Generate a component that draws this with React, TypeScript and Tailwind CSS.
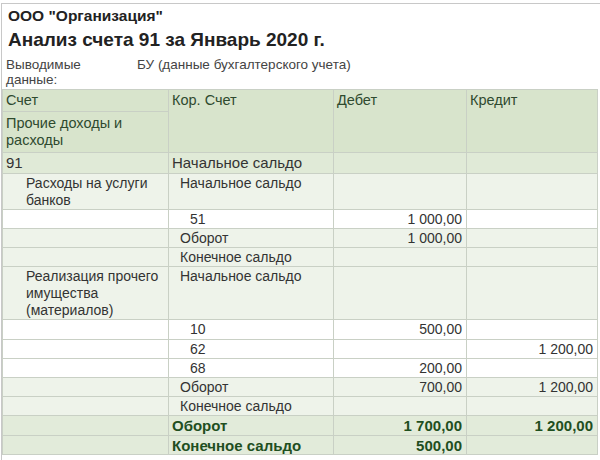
type Row = {
    acc?: string;
    accIndent?: number;
    kor: string;
    korIndent: number;
    debit?: string;
    credit?: string;
    h: number;
    bg: string;
    kind?: "group" | "total";
};

const rows: Row[] = [
    { acc: "91", accIndent: 3, kor: "Начальное сальдо", korIndent: 3, h: 21, bg: "bg-[#e0ead7]", kind: "group" },
    { acc: "Расходы на услуги банков", accIndent: 23, kor: "Начальное сальдо", korIndent: 11, h: 35, bg: "bg-[#eef3ea]" },
    { kor: "51", korIndent: 21, debit: "1 000,00", h: 19, bg: "bg-white" },
    { kor: "Оборот", korIndent: 11, debit: "1 000,00", h: 19, bg: "bg-[#eef3ea]" },
    { kor: "Конечное сальдо", korIndent: 11, h: 19, bg: "bg-[#eef3ea]" },
    { acc: "Реализация прочего имущества (материалов)", accIndent: 23, kor: "Начальное сальдо", korIndent: 11, h: 53, bg: "bg-[#eef3ea]" },
    { kor: "10", korIndent: 21, debit: "500,00", h: 20, bg: "bg-white" },
    { kor: "62", korIndent: 21, credit: "1 200,00", h: 19, bg: "bg-white" },
    { kor: "68", korIndent: 21, debit: "200,00", h: 19, bg: "bg-white" },
    { kor: "Оборот", korIndent: 11, debit: "700,00", credit: "1 200,00", h: 19, bg: "bg-[#eef3ea]" },
    { kor: "Конечное сальдо", korIndent: 11, h: 19, bg: "bg-[#eef3ea]" },
    { kor: "Оборот", korIndent: 3, debit: "1 700,00", credit: "1 200,00", h: 20, bg: "bg-[#e2ebda]", kind: "total" },
    { kor: "Конечное сальдо", korIndent: 3, debit: "500,00", h: 19, bg: "bg-[#e2ebda]", kind: "total" },
];

const cell = "border border-[#c9d0c5] align-top p-0";

function rowText(kind?: Row["kind"]) {
    if (kind === "group") return "text-[15px]";
    if (kind === "total") return "font-bold text-[15px] text-[#1f4f1f]";
    return "";
}

export default function App() {
    return (
        <div
            className="w-[600px] h-[460px] bg-white overflow-hidden text-[#333] pt-[3px]"
            style={{ fontFamily: '"Liberation Sans", Arial, sans-serif' }}
        >
            <div className="ml-[1px] border-l border-t border-[#c8c8c8] h-full">
                <div className="pl-[6px] pt-[2px]">
                    <div className="text-[15.5px] font-bold leading-[20px] text-[#222]">
                        ООО "Организация"
                    </div>
                    <div className="text-[19px] font-bold leading-[26px] text-[#222] mt-[1px]">
                        Анализ счета 91 за Январь 2020 г.
                    </div>
                    <div className="flex text-[13.5px] leading-[15px] text-[#444] mt-[4px] h-[31px] -ml-[2px]">
                        <div className="w-[131px]">
                            Выводимые
                            <br />
                            данные:
                        </div>
                        <div>БУ (данные бухгалтерского учета)</div>
                    </div>
                </div>
                <table className="border-collapse table-fixed w-[595px] text-[14px] leading-[17px] mt-[1px]">
                    <colgroup>
                        <col className="w-[166px]" />
                        <col className="w-[165px]" />
                        <col className="w-[133px]" />
                        <col className="w-[131px]" />
                    </colgroup>
                    <thead className="bg-[#d8e4cc] text-[#2f4a2f] text-[14.5px]">
                        <tr className="h-[22px]">
                            <td className={`${cell} pl-[3px] pt-[2px]`}>Счет</td>
                            <td rowSpan={2} className={`${cell} pl-[3px] pt-[2px]`}>
                                Кор. Счет
                            </td>
                            <td rowSpan={2} className={`${cell} pl-[3px] pt-[2px]`}>
                                Дебет
                            </td>
                            <td rowSpan={2} className={`${cell} pl-[3px] pt-[2px]`}>
                                Кредит
                            </td>
                        </tr>
                        <tr className="h-[41px]">
                            <td className={`${cell} pl-[3px] pr-[6px] pt-[3px]`}>
                                Прочие доходы и расходы
                            </td>
                        </tr>
                    </thead>
                    <tbody>
                        {rows.map((r, i) => (
                            <tr key={i} className={`${r.bg} ${rowText(r.kind)}`} style={{ height: r.h }}>
                                <td
                                    className={`${cell} pr-[6px] pt-[1px]`}
                                    style={{ paddingLeft: r.accIndent ?? 3 }}
                                >
                                    {r.acc}
                                </td>
                                <td className={`${cell} pt-[1px]`} style={{ paddingLeft: r.korIndent }}>
                                    {r.kor}
                                </td>
                                <td className={`${cell} text-right pr-[4px] pt-[1px]`}>{r.debit}</td>
                                <td className={`${cell} text-right pr-[4px] pt-[1px]`}>{r.credit}</td>
                            </tr>
                        ))}
                    </tbody>
                </table>
            </div>
        </div>
    );
}
